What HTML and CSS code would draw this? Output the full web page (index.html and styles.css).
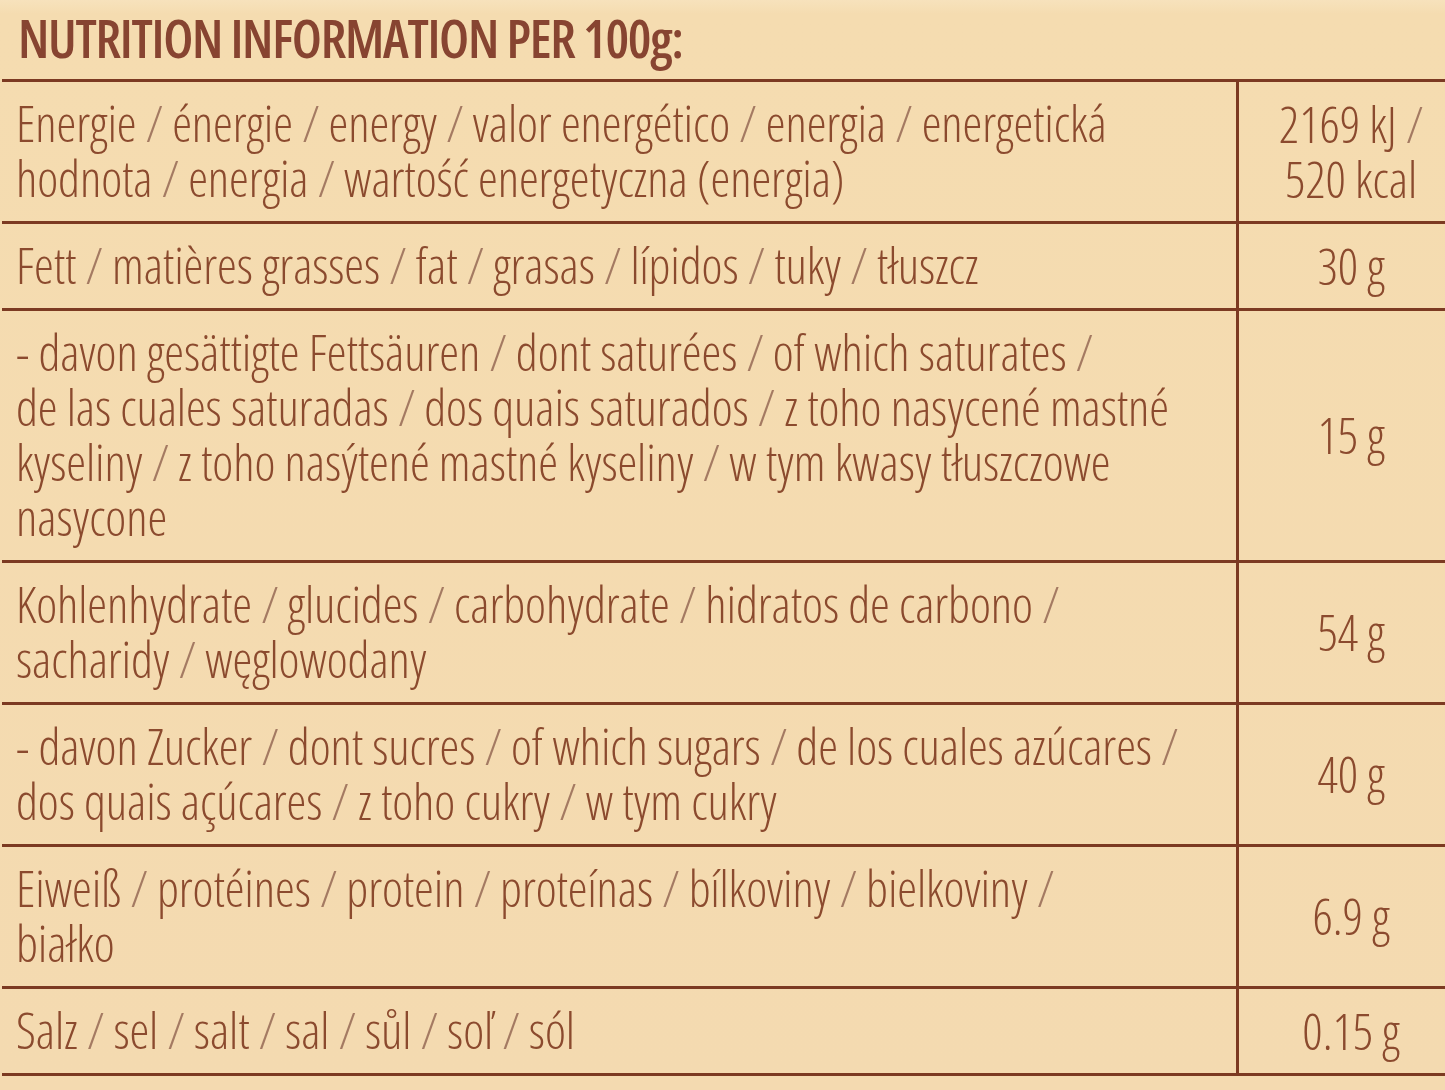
FILE: index.html
```html
<!DOCTYPE html>
<html lang="en">
<head>
<meta charset="utf-8">
<title>Nutrition information</title>
<link rel="stylesheet" href="styles.css">
</head>
<body>
<div class="panel">
  <h1 class="title">NUTRITION INFORMATION PER 100g:</h1>
  <div class="table">
    <div class="row">
      <div class="label">Energie <span class="sep">/</span> énergie <span class="sep">/</span> energy <span class="sep">/</span> valor energético <span class="sep">/</span> energia <span class="sep">/</span> energetická<br>hodnota <span class="sep">/</span> energia <span class="sep">/</span> wartość energetyczna (energia)</div>
      <div class="value"><span class="num">2169 kJ <span class="sep">/</span><br>520 kcal</span></div>
    </div>
    <div class="row">
      <div class="label">Fett <span class="sep">/</span> matières grasses <span class="sep">/</span> fat <span class="sep">/</span> grasas <span class="sep">/</span> lípidos <span class="sep">/</span> tuky <span class="sep">/</span> tłuszcz</div>
      <div class="value"><span class="num">30 g</span></div>
    </div>
    <div class="row">
      <div class="label">- davon gesättigte Fettsäuren <span class="sep">/</span> dont saturées <span class="sep">/</span> of which saturates <span class="sep">/</span><br>de las cuales saturadas <span class="sep">/</span> dos quais saturados <span class="sep">/</span> z toho nasycené mastné<br>kyseliny <span class="sep">/</span> z toho nasýtené mastné kyseliny <span class="sep">/</span> w tym kwasy tłuszczowe<br>nasycone</div>
      <div class="value"><span class="num">15 g</span></div>
    </div>
    <div class="row">
      <div class="label">Kohlenhydrate <span class="sep">/</span> glucides <span class="sep">/</span> carbohydrate <span class="sep">/</span> hidratos de carbono <span class="sep">/</span><br>sacharidy <span class="sep">/</span> węglowodany</div>
      <div class="value"><span class="num">54 g</span></div>
    </div>
    <div class="row">
      <div class="label">- davon Zucker <span class="sep">/</span> dont sucres <span class="sep">/</span> of which sugars <span class="sep">/</span> de los cuales azúcares <span class="sep">/</span><br>dos quais açúcares <span class="sep">/</span> z toho cukry <span class="sep">/</span> w tym cukry</div>
      <div class="value"><span class="num">40 g</span></div>
    </div>
    <div class="row">
      <div class="label">Eiweiß <span class="sep">/</span> protéines <span class="sep">/</span> protein <span class="sep">/</span> proteínas <span class="sep">/</span> bílkoviny <span class="sep">/</span> bielkoviny <span class="sep">/</span><br>białko</div>
      <div class="value"><span class="num">6.9 g</span></div>
    </div>
    <div class="row">
      <div class="label">Salz <span class="sep">/</span> sel <span class="sep">/</span> salt <span class="sep">/</span> sal <span class="sep">/</span> sůl <span class="sep">/</span> soľ <span class="sep">/</span> sól</div>
      <div class="value"><span class="num">0.15 g</span></div>
    </div>
  </div>
</div>
</body>
</html>
```
FILE: styles.css
```css
html, body {
  margin: 0;
  padding: 0;
}

body {
  width: 1445px;
  height: 1090px;
  overflow: hidden;
  background: #f5dcb0;
  font-family: "Open Sans", "DejaVu Sans", sans-serif;
  font-stretch: condensed;
  color: #8b4a2e;
}

.panel {
  background: linear-gradient(180deg, #f7e2bc 0px, #f5dcb0 14px, #f4dab0 100%);
  height: 1090px;
}

.title {
  margin: 0;
  padding: 8px 0 11px 18px;
  font-size: 53px;
  line-height: 60px;
  font-weight: 600;
  letter-spacing: -1.3px;
  color: #874431;
}

.table {
  margin-left: 2px;
  border-bottom: 3px solid #7c3a22;
}

.row {
  display: grid;
  grid-template-columns: 1234px 1fr;
  border-top: 3px solid #7c3a22;
}

.label,
.value {
  font-size: 50px;
  font-weight: 300;
  line-height: 55px;
  letter-spacing: -0.08px;
  white-space: nowrap;
}

.label {
  padding: 14px 0 15px 14px;
}

.value {
  display: flex;
  justify-content: center;
  align-items: center;
  text-align: center;
  padding-left: 18px;
  border-left: 3px solid #7c3a22;
}

.num {
  display: block;
}

.sep {
  color: #a47a62;
}
```
